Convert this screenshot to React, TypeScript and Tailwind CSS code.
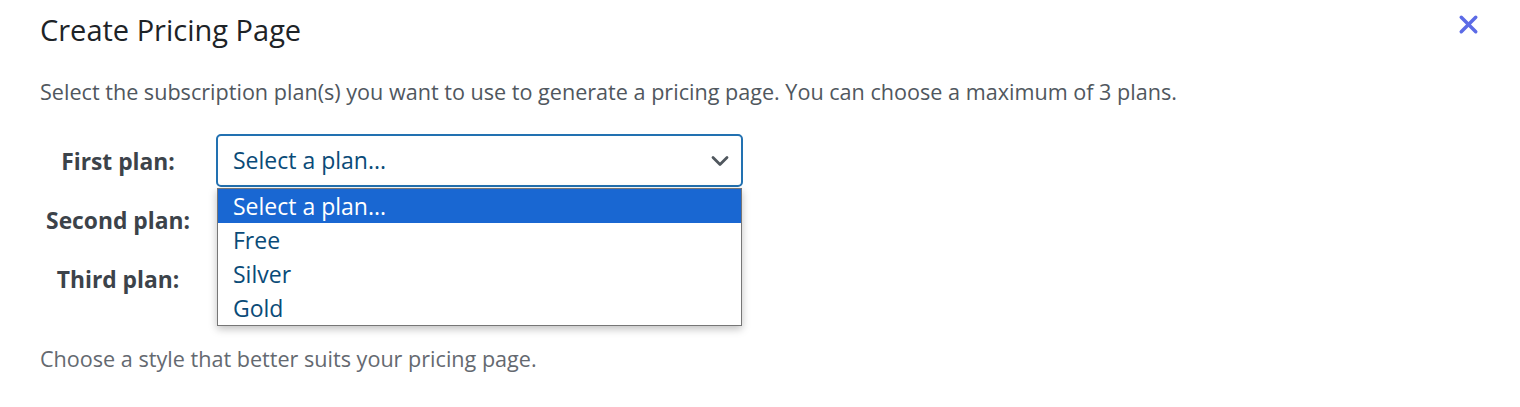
import React from 'react';
import { X, ChevronDown } from 'lucide-react';

const plans = ['Select a plan...', 'Free', 'Silver', 'Gold'];

function PlanRow({ label, open, covered }: { label: string; open?: boolean; covered?: boolean }) {
  return (
    <div className="flex items-center">
      <div className="w-[156px] pt-[4px] text-center text-[22.8px] font-bold text-[#3c434a]">{label}</div>
      <div className={'relative ml-[20px] ' + (covered ? 'invisible' : '')}>
        <div
          className={
            'flex h-[53px] w-[527px] items-center justify-between rounded-[5px] border-2 bg-white pl-[15px] pr-[7px] text-[23px] text-[#0a4b78] ' +
            (open ? 'border-[#2271b1]' : 'border-[#8c8f94]')
          }
        >
          <span>Select a plan...</span>
          <ChevronDown className="h-[28px] w-[28px] text-[#50575e]" strokeWidth={2.4} />
        </div>
        {open && (
          <ul className="visible absolute left-[1px] top-[54px] z-10 w-[525px] border border-[#767676] bg-white shadow-[0_3px_8px_rgba(0,0,0,0.25)]">
            {plans.map((p, i) => (
              <li
                key={p}
                className={
                  'flex h-[34px] items-center pl-[15px] text-[23px] ' +
                  (i === 0 ? 'bg-[#1967d2] text-white' : 'text-[#0a4b78]')
                }
              >
                {p}
              </li>
            ))}
          </ul>
        )}
      </div>
    </div>
  );
}

export default function App() {
  return (
    <div className="relative h-[407px] w-[1520px] bg-white font-['Open_Sans',sans-serif]">
      <button className="absolute right-[37px] top-[10px] text-[#5c6be6]">
        <X className="h-[29px] w-[29px]" strokeWidth={2.9} />
      </button>
      <div className="px-[40px] pt-[10px]">
        <h2 className="text-[29px] font-normal leading-[40px] text-[#1d2327]">Create Pricing Page</h2>
        <p className="mt-[27px] text-[21.6px] leading-[30px] text-[#50575e]">
          Select the subscription plan(s) you want to use to generate a pricing page. You can choose a maximum of 3 plans.
        </p>
        <div className="mt-[27px] flex flex-col gap-[6px]">
          <PlanRow label="First plan:" open />
          <PlanRow label="Second plan:" covered />
          <PlanRow label="Third plan:" covered />
        </div>
        <p className="mt-[39px] text-[21.6px] leading-[30px] text-[#646970]">
          Choose a style that better suits your pricing page.
        </p>
      </div>
    </div>
  );
}
